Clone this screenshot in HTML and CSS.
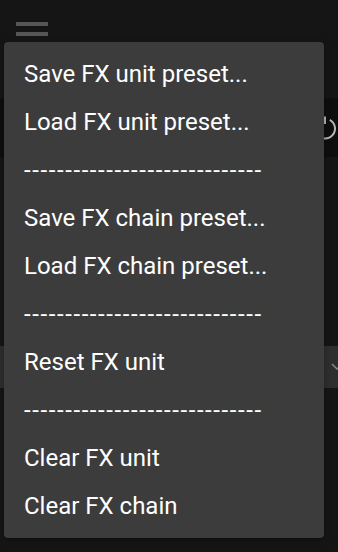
FILE: index.html
```html
<!DOCTYPE html>
<html lang="en">
<head>
    <meta charset="UTF-8">
    <meta name="viewport" content="width=device-width, initial-scale=1.0">
    <title>FX unit menu</title>
    <link rel="stylesheet" href="styles.css">
</head>
<body>

<div class="toolbar">
    <button class="menu-button" aria-label="Menu">
        <span></span><span></span><span></span>
    </button>
</div>
<div class="unit-header">
    <svg class="power" width="24" height="24" viewBox="0 0 24 24">
        <path d="M7.2 3.8 A10 10 0 1 0 16.8 3.8" fill="none" stroke="#b5b5b5" stroke-width="2"/>
        <line x1="12" y1="0.5" x2="12" y2="8" stroke="#b5b5b5" stroke-width="2"/>
    </svg>
</div>
<div class="unit-select">
    <svg class="chevron" width="12" height="8" viewBox="0 0 12 8">
        <path d="M1 1 L6 6 L11 1" fill="none" stroke="#888" stroke-width="1.5"/>
    </svg>
</div>

<ul class="menu">
    <li class="menu-item">Save FX unit preset...</li>
    <li class="menu-item">Load FX unit preset...</li>
    <li class="menu-item separator">-----------------------------</li>
    <li class="menu-item">Save FX chain preset...</li>
    <li class="menu-item">Load FX chain preset...</li>
    <li class="menu-item separator">-----------------------------</li>
    <li class="menu-item">Reset FX unit</li>
    <li class="menu-item separator">-----------------------------</li>
    <li class="menu-item">Clear FX unit</li>
    <li class="menu-item">Clear FX chain</li>
</ul>

</body>
</html>
```

FILE: styles.css
```css
html, body {
    margin: 0;
    height: 100%;
}
body {
    font-family: Roboto, "Noto Sans", sans-serif;
    background-color: #151515;
    color: #fff;
    position: relative;
    overflow: hidden;
}
.toolbar {
    height: 98px;
}
.menu-button {
    display: flex;
    flex-direction: column;
    gap: 6px;
    margin: 0;
    padding: 22px 0 0 16px;
    border: none;
    background: none;
}
.menu-button span {
    display: block;
    width: 32px;
    height: 4px;
    background-color: #555;
}
.unit-header {
    height: 59px;
    background-color: #0e0e0e;
    display: flex;
    align-items: center;
    justify-content: flex-end;
}
.power {
    margin-right: 1px;
}
.unit-select {
    margin-top: 189px;
    height: 42px;
    background-color: #2e2e2e;
    display: flex;
    align-items: center;
    justify-content: flex-end;
}
.chevron {
    margin-right: -5px;
}
.menu {
    position: absolute;
    top: 42px;
    left: 4px;
    width: 320px;
    margin: 0;
    padding: 8px 0;
    list-style: none;
    background-color: #3c3c3c;
    border-radius: 4px;
    box-shadow: 0 2px 6px rgba(0, 0, 0, 0.3);
}
.menu-item {
    height: 48px;
    line-height: 48px;
    padding-left: 20px;
    font-size: 24px;
    white-space: nowrap;
}
.separator {
    letter-spacing: 1.6px;
}
```
